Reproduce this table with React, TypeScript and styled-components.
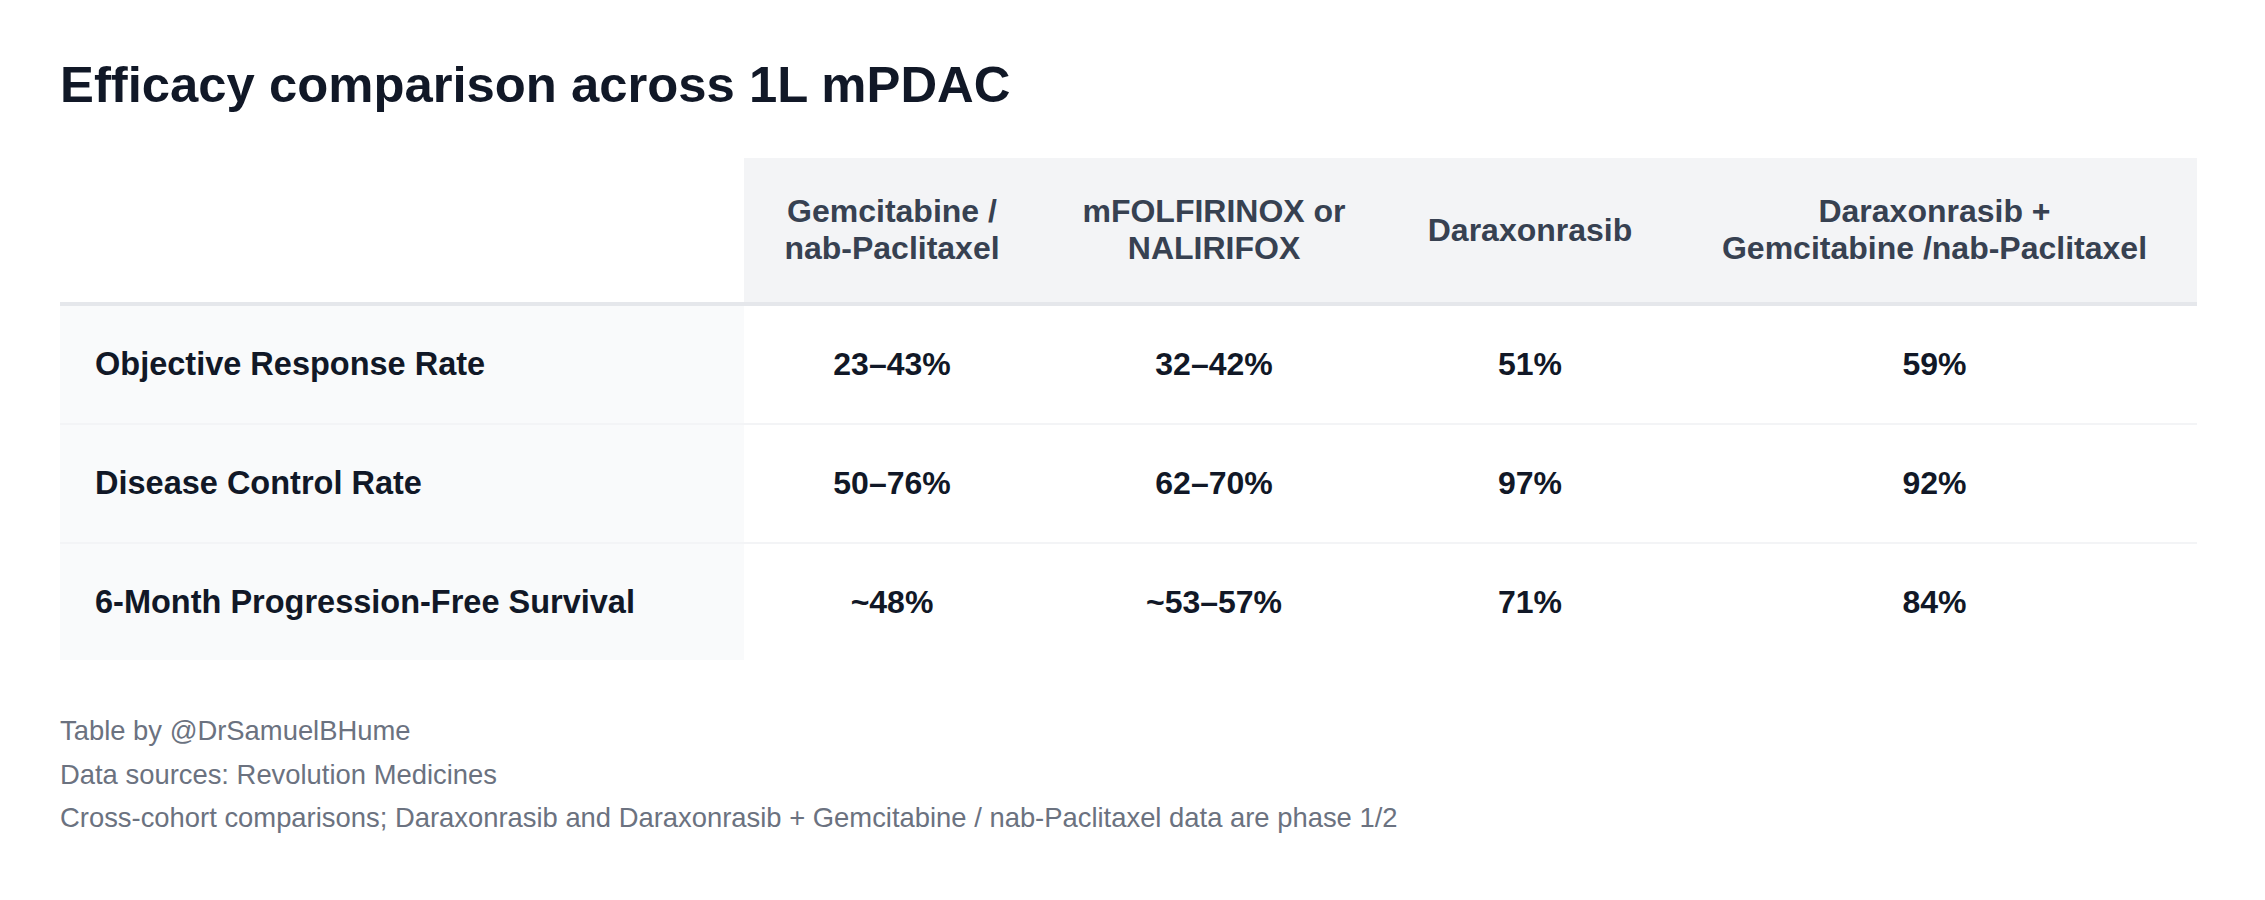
import { FC, Fragment } from 'react';
import styled, { createGlobalStyle } from 'styled-components';

const GlobalStyle = createGlobalStyle`
  html,
  body {
    margin: 0;
    background: #fff;
  }

  body {
    font-family: 'Liberation Sans', Arial, Helvetica, sans-serif;
    -webkit-font-smoothing: antialiased;
  }
`;

interface IRow {
  label: string;
  values: string[];
}

const headers: string[][] = [
  ['Gemcitabine /', 'nab-Paclitaxel'],
  ['mFOLFIRINOX or', 'NALIRIFOX'],
  ['Daraxonrasib'],
  ['Daraxonrasib +', 'Gemcitabine /nab-Paclitaxel'],
];

const columnWidths = [684, 296, 348, 284, 525];

const rows: IRow[] = [
  { label: 'Objective Response Rate', values: ['23–43%', '32–42%', '51%', '59%'] },
  { label: 'Disease Control Rate', values: ['50–76%', '62–70%', '97%', '92%'] },
  {
    label: '6-Month Progression-Free Survival',
    values: ['~48%', '~53–57%', '71%', '84%'],
  },
];

const notes = [
  'Table by @DrSamuelBHume',
  'Data sources: Revolution Medicines',
  'Cross-cohort comparisons; Daraxonrasib and Daraxonrasib + Gemcitabine / nab-Paclitaxel data are phase 1/2',
];

const Page = styled.main`
  padding: 55px 68px 40px 60px;
`;

const Title = styled.h1`
  margin: 0 0 44px;
  font-size: 50.8px;
  font-weight: 700;
  line-height: normal;
  color: #111827;
`;

const Table = styled.table`
  width: 100%;
  table-layout: fixed;
  border-collapse: separate;
  border-spacing: 0;
`;

const HeadCell = styled.th<{ $blank?: boolean }>`
  padding: 35px 16px;
  background: ${({ $blank }) => ($blank ? '#fff' : '#f3f4f6')};
  border-bottom: 4px solid #e5e7eb;
  font-size: 32px;
  font-weight: 700;
  line-height: normal;
  color: #374151;
  text-align: center;
  vertical-align: middle;
`;

const BodyRow = styled.tr<{ $last?: boolean }>`
  td {
    border-bottom: ${({ $last }) => ($last ? 'none' : '2px solid #f3f4f6')};
  }
`;

const LabelCell = styled.td`
  padding: 40px 34px 40px 35px;
  background: #f9fafb;
  font-size: 32.5px;
  font-weight: 700;
  line-height: 36.8px;
  color: #111827;
  text-align: left;
`;

const ValueCell = styled.td`
  padding: 40px 16px;
  font-size: 32px;
  font-weight: 700;
  line-height: 36.8px;
  color: #111827;
  text-align: center;
`;

const Notes = styled.div`
  margin-top: 49px;
`;

const Note = styled.p`
  margin: 0;
  font-size: 27.4px;
  line-height: 43.5px;
  color: #6b7280;
`;

const App: FC = () => (
  <>
    <GlobalStyle />
    <Page>
      <Title>Efficacy comparison across 1L mPDAC</Title>

      <Table>
        <colgroup>
          {columnWidths.map((width) => (
            <col key={width} style={{ width }} />
          ))}
        </colgroup>

        <thead>
          <tr>
            <HeadCell $blank />
            {headers.map((lines) => (
              <HeadCell key={lines.join(' ')}>
                {lines.map((line, i) => (
                  <Fragment key={line}>
                    {i > 0 && <br />}
                    {line}
                  </Fragment>
                ))}
              </HeadCell>
            ))}
          </tr>
        </thead>

        <tbody>
          {rows.map(({ label, values }, index) => (
            <BodyRow key={label} $last={index === rows.length - 1}>
              <LabelCell>{label}</LabelCell>
              {values.map((value, i) => (
                <ValueCell key={`${label}-${i}`}>{value}</ValueCell>
              ))}
            </BodyRow>
          ))}
        </tbody>
      </Table>

      <Notes>
        {notes.map((note) => (
          <Note key={note}>{note}</Note>
        ))}
      </Notes>
    </Page>
  </>
);

export default App;
